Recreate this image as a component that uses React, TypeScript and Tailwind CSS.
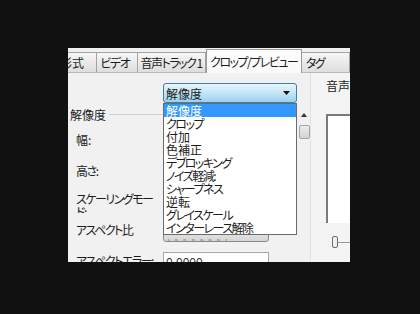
import React from 'react';

const items = [
  '解像度',
  'クロップ',
  '付加',
  '色補正',
  'デブロッキング',
  'ノイズ軽減:',
  'シャープネス',
  '逆転',
  'グレイスケール',
  'インターレース解除',
];

// pure kanji strings keep normal spacing, kana ones get squeezed like MS UI Gothic
const kanjiOnly = (s: string) => /^[\u4e00-\u9fff:]+$/.test(s);

function Tab({ label, width, selected, align = 'justify-center' }: { label: string; width: string; selected?: boolean; align?: string }) {
  if (selected) {
    return (
      <div
        className={`${width} relative z-10 -mb-px h-[24px] flex items-center justify-center border-x border-t border-[#9a9a9a] bg-[#fbfbfb] pb-[1px] whitespace-nowrap`}
      >
        {label}
      </div>
    );
  }
  return (
    <div
      className={`${width} h-[20px] flex items-center ${align} border-t border-r border-[#a3a3a3] bg-gradient-to-b from-[#f6f6f6] to-[#dedede] whitespace-nowrap`}
    >
      {label}
    </div>
  );
}

export default function App() {
  return (
    <div className="w-[420px] h-[314px] bg-[#111111] pl-[68px] pt-[48px] font-['Noto_Sans_CJK_JP','Noto_Sans',sans-serif] [font-feature-settings:'palt'] text-[12px] leading-[13px] tracking-[-1.5px] text-[#1c1c1c]">
      <div className="w-[282px] h-[214px] relative overflow-hidden bg-[#f0f0f0] flex flex-col">
        {/* tabs */}
        <div className="h-[24px] flex items-end shrink-0">
          <Tab label="形式" width="w-[29px]" align="justify-end pr-[12px] tracking-normal" />
          <Tab label="ビデオ" width="w-[42px]" align="justify-center pr-[4px]" />
          <Tab label="音声トラック 1" width="w-[71px]" />
          <Tab label="クロップ/プレビュー" width="w-[100px]" selected />
          <Tab label="タグ" width="w-[50px]" align="justify-start pl-[4px]" />
        </div>

        {/* page */}
        <div className="flex-1 flex border-t border-[#b9b9b9] bg-[#f1f1f1]">
          {/* labels */}
          <div className="w-[95px] shrink-0 pl-[2px] flex flex-col">
            <div className="mt-[35px] flex items-center">
              <span className="tracking-normal">解像度</span>
              <div className="flex-1 ml-[3px] h-px bg-[#d0d0d0]" />
            </div>
            <div className="mt-[12px] pl-[6px] tracking-normal">幅:</div>
            <div className="mt-[18px] pl-[6px]">高さ:</div>
            <div className="mt-[15px] pl-[6px] h-[21px] overflow-hidden whitespace-nowrap">
              スケーリングモー
              <br />
              ド:
            </div>
            <div className="mt-[10px] pl-[6px] whitespace-nowrap">アスペクト比</div>
            <div className="mt-[18px] pl-[6px] whitespace-nowrap">アスペクトエラー:</div>
          </div>

          {/* controls */}
          <div className="w-[134px] shrink-0 relative flex flex-col pt-[10px]">
            <div className="h-[20px] flex items-center justify-between pl-[2px] pr-[6px] rounded-[3px] border border-[#3c7fb1] bg-gradient-to-b from-[#e8f5fd] via-[#c4e5f6] to-[#98d1ef]">
              <span className="tracking-normal">解像度</span>
              <svg width="7" height="4" viewBox="0 0 7 4">
                <path d="M0 0h7L3.5 4z" fill="#111" />
              </svg>
            </div>

            <div className="mt-[119px] w-[106px] h-[20px] rounded-[3px] border border-[#8a8a8a] bg-gradient-to-b from-[#f2f2f2] to-[#d6d6d6] pl-[3px] flex items-end text-[#9a9a9a] overflow-hidden">
              <span className="-mb-[8px] whitespace-nowrap">ソソソソソソソ</span>
            </div>
            <div className="mt-[10px] w-[106px] h-[22px] border border-[#a9a9a9] bg-white pl-[2px] pt-[4px] tracking-normal font-['Liberation_Sans',sans-serif] text-[#333]">0.0000</div>

            {/* opened list */}
            <div className="absolute left-0 top-[30px] w-[134px] h-[132px] z-20 bg-white border border-[#6b6b6b] flex flex-col">
              {items.map((item, i) => (
                <div
                  key={item}
                  className={`h-[13px] pl-[2px] whitespace-nowrap ${kanjiOnly(item) ? 'tracking-normal' : ''} ${i === 0 ? 'h-[14px] bg-[#3399ff] text-white' : ''}`}
                >
                  {item}
                </div>
              ))}
            </div>
          </div>

          {/* scroll strip */}
          <div className="w-[14px] shrink-0 flex flex-col items-center border-r border-[#e2e2e2] pt-[40px]">
            <svg width="6" height="4" viewBox="0 0 6 4">
              <path d="M0 4h6L3 0z" fill="#333" />
            </svg>
            <div className="mt-[8px] w-[11px] h-[14px] ml-[2px] rounded-[2px] border border-[#a5a5a5] bg-gradient-to-b from-[#ececec] to-[#d3d3d3]" />
          </div>

          {/* right side */}
          <div className="flex-1 pl-[15px] flex flex-col bg-[#f4f4f4]">
            <div className="mt-[6px] whitespace-nowrap tracking-normal">音声</div>
            <div className="mt-[22px] h-[109px] border-l-2 border-t-2 border-[#7a7a7a] bg-white" />
            <div className="mt-[13px] flex items-center pl-[6px]">
              <div className="w-[6px] h-[12px] rounded-[2px] border border-[#6e6e6e] bg-[#eeeeee]" />
              <div className="flex-1 h-px bg-[#9a9a9a]" />
            </div>
          </div>
        </div>
      </div>
    </div>
  );
}
